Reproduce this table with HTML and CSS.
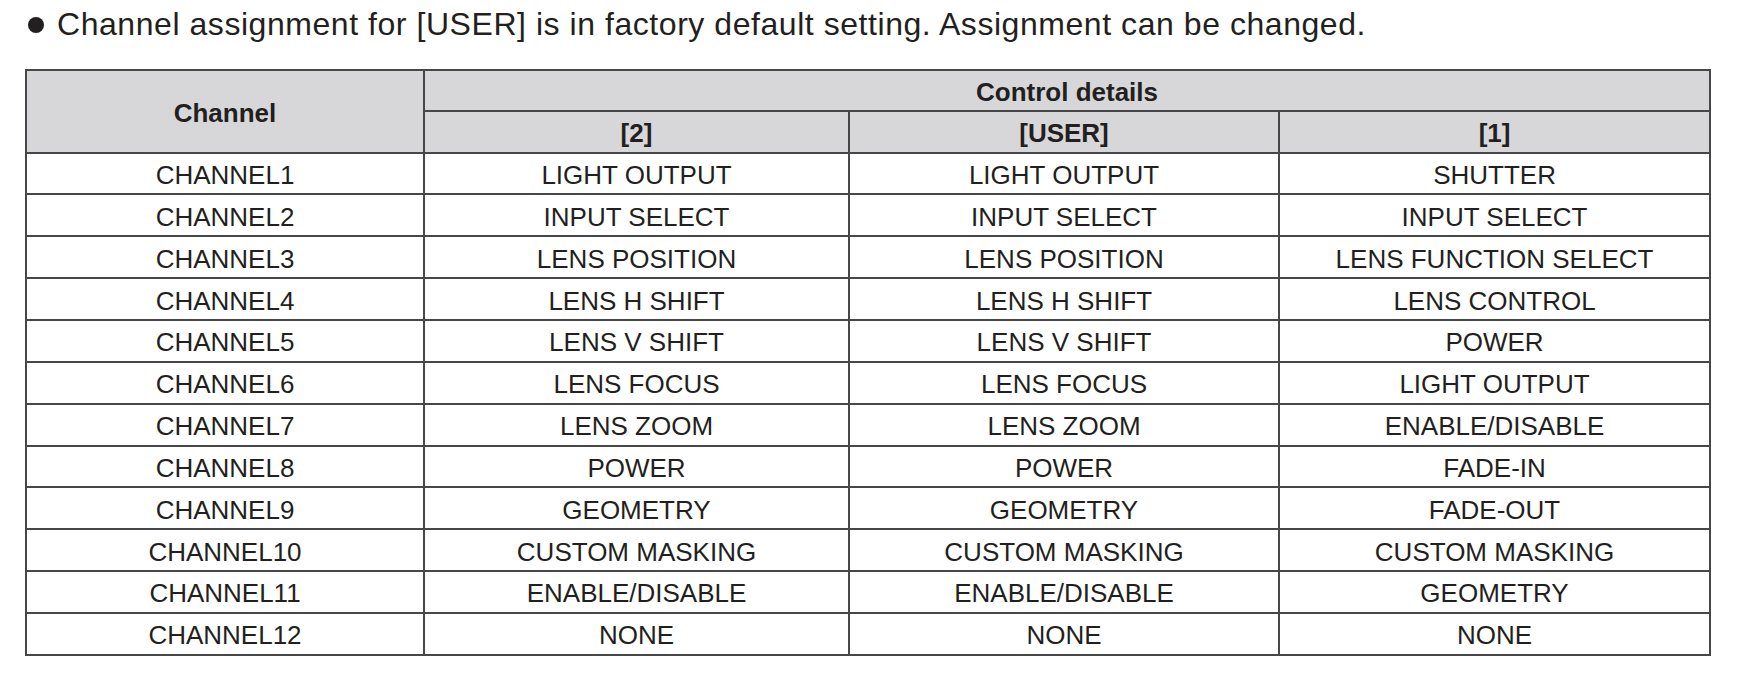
FILE: index.html
```html
<!DOCTYPE html>
<html>
<head>
<meta charset="utf-8">
<link rel="stylesheet" href="styles.css">
</head>
<body>
<p class="note"><span class="bullet"></span><span class="note-text">Channel assignment for [USER] is in factory default setting. Assignment can be changed.</span></p>
<table class="grid">
  <colgroup>
    <col class="c-ch"><col class="c-2"><col class="c-user"><col class="c-1">
  </colgroup>
  <thead>
    <tr class="hrow"><th rowspan="2">Channel</th><th colspan="3">Control details</th></tr>
    <tr class="hrow"><th>[2]</th><th>[USER]</th><th>[1]</th></tr>
  </thead>
  <tbody>
    <tr><td>CHANNEL1</td><td>LIGHT OUTPUT</td><td>LIGHT OUTPUT</td><td>SHUTTER</td></tr>
    <tr><td>CHANNEL2</td><td>INPUT SELECT</td><td>INPUT SELECT</td><td>INPUT SELECT</td></tr>
    <tr><td>CHANNEL3</td><td>LENS POSITION</td><td>LENS POSITION</td><td>LENS FUNCTION SELECT</td></tr>
    <tr><td>CHANNEL4</td><td>LENS H SHIFT</td><td>LENS H SHIFT</td><td>LENS CONTROL</td></tr>
    <tr><td>CHANNEL5</td><td>LENS V SHIFT</td><td>LENS V SHIFT</td><td>POWER</td></tr>
    <tr><td>CHANNEL6</td><td>LENS FOCUS</td><td>LENS FOCUS</td><td>LIGHT OUTPUT</td></tr>
    <tr><td>CHANNEL7</td><td>LENS ZOOM</td><td>LENS ZOOM</td><td>ENABLE/DISABLE</td></tr>
    <tr><td>CHANNEL8</td><td>POWER</td><td>POWER</td><td>FADE-IN</td></tr>
    <tr><td>CHANNEL9</td><td>GEOMETRY</td><td>GEOMETRY</td><td>FADE-OUT</td></tr>
    <tr><td>CHANNEL10</td><td>CUSTOM MASKING</td><td>CUSTOM MASKING</td><td>CUSTOM MASKING</td></tr>
    <tr><td>CHANNEL11</td><td>ENABLE/DISABLE</td><td>ENABLE/DISABLE</td><td>GEOMETRY</td></tr>
    <tr><td>CHANNEL12</td><td>NONE</td><td>NONE</td><td>NONE</td></tr>
  </tbody>
</table>
</body>
</html>
```
FILE: styles.css
```css
html, body {
  margin: 0;
  padding: 0;
  background: #ffffff;
}
body {
  font-family: "Liberation Sans", Arial, sans-serif;
  color: #231f20;
}
.note {
  margin: 0;
  padding: 5px 0 0 28px;
  height: 69px;
  box-sizing: border-box;
  display: flex;
  align-items: flex-start;
  font-size: 32px;
  line-height: 38px;
  letter-spacing: 0.55px;
}
.bullet {
  width: 16px;
  height: 16px;
  border-radius: 50%;
  background: #231f20;
  margin-top: 12px;
  margin-right: 13px;
  flex: none;
}
.grid {
  margin-left: 25px;
  width: 1684px;
  border-collapse: collapse;
  table-layout: fixed;
  font-size: 26px;
}
.c-ch { width: 398px; }
.c-2 { width: 425px; }
.c-user { width: 430px; }
.c-1 { width: 431px; }
.grid th, .grid td {
  border: 2px solid #474749;
  text-align: center;
  padding: 3px 0 0;
  line-height: 30px;
}
.grid th {
  background: #d7d7d9;
  font-weight: bold;
  height: 36.3px;
}
.grid td {
  height: 36.85px;
}
```
